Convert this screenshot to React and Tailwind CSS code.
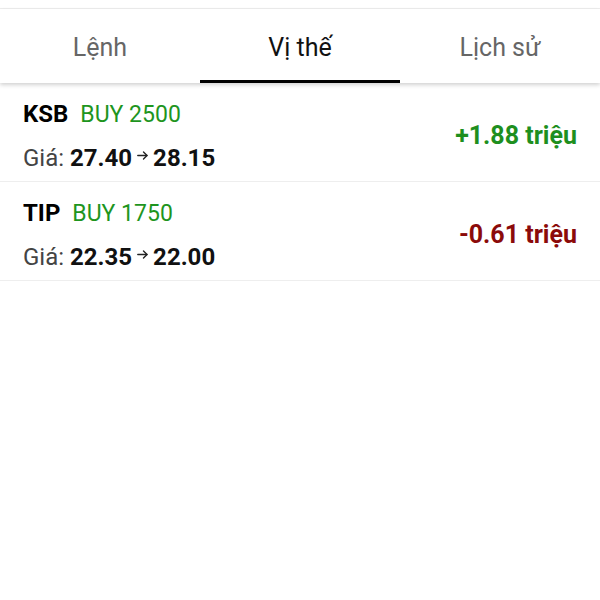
import React from "react";

const rows = [
  { sym: "KSB", qty: "BUY 2500", from: "27.40", to: "28.15", pnl: "+1.88 triệu", pos: true },
  { sym: "TIP", qty: "BUY 1750", from: "22.35", to: "22.00", pnl: "-0.61 triệu", pos: false },
];

function Arrow() {
  return (
    <svg width="11" height="9" viewBox="0 0 11 9" className="mx-[5px] self-start mt-[9px]" fill="none" stroke="#222" strokeWidth="1.4" strokeLinecap="round" strokeLinejoin="round">
      <path d="M0.8 4.5H10" />
      <path d="M6.5 1L10 4.5L6.5 8" />
    </svg>
  );
}

export default function App() {
  return (
    <div className="w-[600px] h-[600px] bg-white overflow-hidden" style={{ fontFamily: "Roboto, 'Noto Sans', sans-serif" }}>
      <div className="h-[8px]" />
      <div className="h-[1px] bg-[#eeeeee]" />
      <div className="relative z-10 bg-white shadow-[0_2px_4px_rgba(0,0,0,0.18)]">
        <div className="flex h-[74px]">
          <div className="flex-1 flex items-center justify-center text-[25px] text-[#666666] pt-[3px]">Lệnh</div>
          <div className="flex-1 flex flex-col">
            <div className="flex-1 flex items-center justify-center text-[25px] text-[#111111] pt-[6px]">Vị thế</div>
            <div className="h-[3px] bg-black" />
          </div>
          <div className="flex-1 flex items-center justify-center text-[25px] text-[#666666] pt-[3px]">Lịch sử</div>
        </div>
      </div>
      <div>
        {rows.map((r) => (
          <div key={r.sym} className="flex items-center justify-between pl-[23px] pr-[23px] h-[99px] border-b border-[#eeeeee]">
            <div className="flex flex-col gap-[11px] pt-[8px]">
              <div className="flex items-baseline leading-[32px]">
                <span className="text-[24px] font-bold text-black">{r.sym}</span>
                <span className="text-[23px] text-[#1e951e] ml-[12px]">{r.qty}</span>
              </div>
              <div className="flex items-baseline leading-[32px] text-[24px]">
                <span className="text-[#444444]">Giá:</span>
                <span className="font-bold text-[#111111] ml-[6px]">{r.from}</span>
                <Arrow />
                <span className="font-bold text-[#111111]">{r.to}</span>
              </div>
            </div>
            <div className={"text-[25px] font-bold pt-[8px] " + (r.pos ? "text-[#1e8f1e]" : "text-[#8b0a0a]")}>{r.pnl}</div>
          </div>
        ))}
      </div>
    </div>
  );
}
